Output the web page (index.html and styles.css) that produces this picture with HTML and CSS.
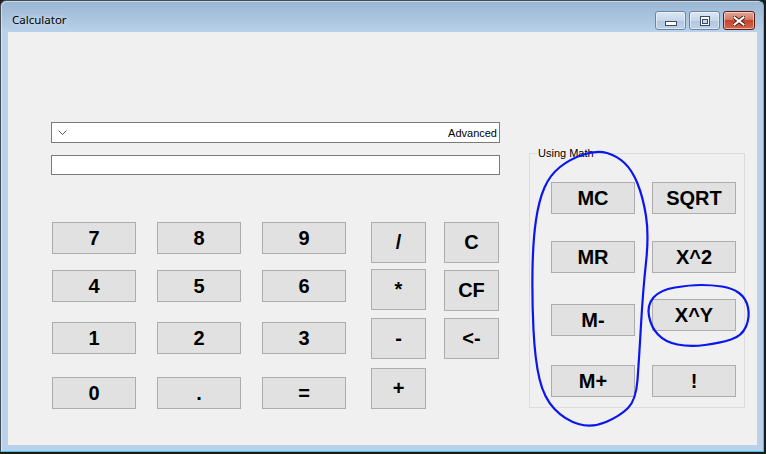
FILE: index.html
```html
<!DOCTYPE html>
<html lang="en">
<head>
    <meta charset="UTF-8">
    <title>Calculator</title>
    <link rel="stylesheet" href="styles.css">
</head>
<body>
    <div class="window">
        <div class="titlebar">
            <span class="title">Calculator</span>
            <div class="caption-buttons">
                <span class="cap-btn">
                    <svg width="12" height="5" viewBox="0 0 12 5"><rect x="0.5" y="0.5" width="11" height="4" fill="#fff" stroke="#3b4b63"/></svg>
                </span>
                <span class="cap-btn">
                    <svg width="10" height="10" viewBox="0 0 10 10"><rect x="0.5" y="0.5" width="9" height="9" fill="#fff" stroke="#3b4b63"/><rect x="2.5" y="3.5" width="5" height="4" fill="#c9d8ea" stroke="#3b4b63"/></svg>
                </span>
                <span class="cap-btn close">
                    <svg width="12" height="10" viewBox="0 0 12 10"><path d="M1.5 1.5 L10.5 8.5 M10.5 1.5 L1.5 8.5" stroke="#4a1a12" stroke-width="4" stroke-linecap="square"/><path d="M1.5 1.5 L10.5 8.5 M10.5 1.5 L1.5 8.5" stroke="#fff" stroke-width="2" stroke-linecap="square"/></svg>
                </span>
            </div>
        </div>

        <div class="client">
            <div class="main-panel">
                <!-- mode selector -->
                <div class="combo">
                    <svg width="9" height="5" viewBox="0 0 9 5"><path d="M0.5 0.5 L4.5 4.5 L8.5 0.5" fill="none" stroke="#555" stroke-width="1"/></svg>
                    <span>Advanced</span>
                </div>
                <div class="display"></div>

                <div class="keypad">
                    <div class="digits">
                        <button class="btn">7</button>
                        <button class="btn">8</button>
                        <button class="btn">9</button>
                        <button class="btn">4</button>
                        <button class="btn">5</button>
                        <button class="btn">6</button>
                        <button class="btn">1</button>
                        <button class="btn">2</button>
                        <button class="btn">3</button>
                        <button class="btn">0</button>
                        <button class="btn">.</button>
                        <button class="btn">=</button>
                    </div>
                    <div class="ops">
                        <button class="btn tall">/</button>
                        <button class="btn tall">*</button>
                        <button class="btn tall">-</button>
                        <button class="btn tall">+</button>
                    </div>
                    <div class="edit">
                        <button class="btn tall">C</button>
                        <button class="btn tall">CF</button>
                        <button class="btn tall">&lt;-</button>
                    </div>
                </div>
            </div>

            <!-- memory and math functions -->
            <div class="group">
                <span class="group-title">Using Math</span>
                <div class="mem-col">
                    <button class="btn">MC</button>
                    <button class="btn">MR</button>
                    <button class="btn">M-</button>
                    <button class="btn">M+</button>
                </div>
                <div class="fn-col">
                    <button class="btn">SQRT</button>
                    <button class="btn">X^2</button>
                    <button class="btn">X^Y</button>
                    <button class="btn">!</button>
                </div>
            </div>
        </div>

        <!-- pen marks drawn on top -->
        <svg class="marks" width="764" height="452" viewBox="0 0 764 452">
            <path d="M607 153 Q597 150 583.5 154.5 Q570 159 560 167 Q550 175 544.5 187.5 Q539 200 536 220 Q533 240 532.5 270 Q532 300 533.5 330 Q535 360 539.5 379 Q544 398 554.5 409 Q565 420 578.5 424 Q592 428 606 422 Q620 416 628 408 Q636 400 637.5 380 Q639 360 641 325 Q643 290 646 262.5 Q649 235 646 216 Q643 197 637.5 183.5 Q632 170 624.5 163 Q617 156 607 153 Z"/>
            <path d="M701 285 Q690 285 675 287.5 Q660 290 653.5 297.5 Q647 305 649 316 Q651 327 658 334.5 Q665 342 677.5 344.5 Q690 347 705 345 Q720 343 731 339.5 Q742 336 746 326.5 Q750 317 748 307.5 Q746 298 739 293 Q732 288 722 286.5 Q712 285 701 285 Z"/>
        </svg>
    </div>
</body>
</html>
```

FILE: styles.css
```css
body {
    margin: 0;
    background-color: #1c1c1c;
    font-family: "Liberation Sans", Arial, sans-serif;
}

.window {
    position: relative;
    box-sizing: border-box;
    width: 764px;
    height: 452px;
    display: flex;
    flex-direction: column;
    border: 1px solid #474d55;
    border-right-color: #43c3e3;
    border-bottom-color: #43c3e3;
    border-radius: 6px 6px 0 0;
    padding-bottom: 6px;
    background: linear-gradient(to bottom, #9ab6d3 0px, #adc7e1 20px, #b9d1ea 31px, #b9d1ea 100%);
    box-shadow: inset 1px 1px 0 rgba(255, 255, 255, 0.45);
}

.titlebar {
    height: 31px;
    flex-shrink: 0;
    display: flex;
    justify-content: space-between;
    align-items: flex-start;
    padding: 0 8px 0 11px;
}

.title {
    margin-top: 11px;
    font-family: "Noto Sans", "DejaVu Sans", sans-serif;
    font-size: 11.5px;
    color: #000;
    text-shadow: 0 0 6px rgba(255, 255, 255, 0.9);
}

.caption-buttons {
    display: flex;
    gap: 3px;
    margin-top: 10px;
}

.cap-btn {
    box-sizing: border-box;
    width: 31px;
    height: 19px;
    display: flex;
    align-items: center;
    justify-content: center;
    border: 1px solid #6f84a3;
    border-radius: 3px;
    background: linear-gradient(to bottom, #dbe7f4 0%, #c6d7ea 50%, #b1c7e1 51%, #bcd1e8 100%);
    box-shadow: inset 0 0 0 1px rgba(255, 255, 255, 0.5);
}

.cap-btn:first-child svg {
    margin-top: 6px;
}

.cap-btn.close {
    width: 32px;
    border-color: #5a1d14;
    background: linear-gradient(to bottom, #e5a596 0%, #d27a66 45%, #c4442b 50%, #d5664d 100%);
}

.client {
    flex: 1;
    margin: 0 6px 0 7px;
    display: flex;
    align-items: flex-start;
    padding-left: 43px;
    background-color: #f0f0f0;
}

.main-panel {
    width: 449px;
    margin-top: 90px;
}

.combo {
    box-sizing: border-box;
    height: 21px;
    display: flex;
    align-items: center;
    justify-content: space-between;
    padding: 0 2px 0 6px;
    border: 1px solid #7a7a7a;
    background-color: #fff;
    font-size: 11px;
    color: #000;
}

.display {
    box-sizing: border-box;
    height: 20px;
    margin-top: 12px;
    border: 1px solid #7a7a7a;
    background-color: #fff;
}

.btn {
    box-sizing: border-box;
    width: 84px;
    height: 32px;
    margin: 0;
    padding: 0;
    border: 1px solid #adadad;
    background-color: #e1e1e1;
    color: #000;
    font-family: "Liberation Sans", Arial, sans-serif;
    font-weight: bold;
    font-size: 20px;
}

.btn.tall {
    width: 55px;
    height: 41px;
}

.keypad {
    display: flex;
    align-items: flex-start;
    margin: 47px 0 0 1px;
}

.digits {
    display: grid;
    grid-template-columns: repeat(3, 84px);
    grid-template-rows: 48px 52px 55px 32px;
    column-gap: 21px;
    align-items: start;
}

.ops {
    display: grid;
    grid-template-rows: 47px 49px 50px 41px;
    align-items: start;
    margin-left: 25px;
}

.edit {
    display: grid;
    grid-template-rows: 48px 48px 41px;
    align-items: start;
    margin-left: 18px;
}

.group {
    position: relative;
    box-sizing: border-box;
    width: 216px;
    height: 255px;
    margin: 121px 0 0 29px;
    padding: 28px 0 0 21px;
    display: flex;
    align-items: flex-start;
    border: 1px solid #dcdcdc;
}

.group-title {
    position: absolute;
    top: -7px;
    left: 7px;
    padding: 0 1px;
    background-color: #f0f0f0;
    font-size: 11px;
    color: #000;
}

.mem-col {
    display: grid;
    grid-template-rows: 59px 63px 61px 32px;
    align-items: start;
}

.fn-col {
    display: grid;
    grid-template-rows: 59px 58px 66px 32px;
    align-items: start;
    margin-left: 17px;
}

.marks {
    position: absolute;
    top: -1px;
    left: -1px;
    pointer-events: none;
}

.marks path {
    fill: none;
    stroke: #0b16ef;
    stroke-width: 2.2;
    stroke-linejoin: round;
}
```
